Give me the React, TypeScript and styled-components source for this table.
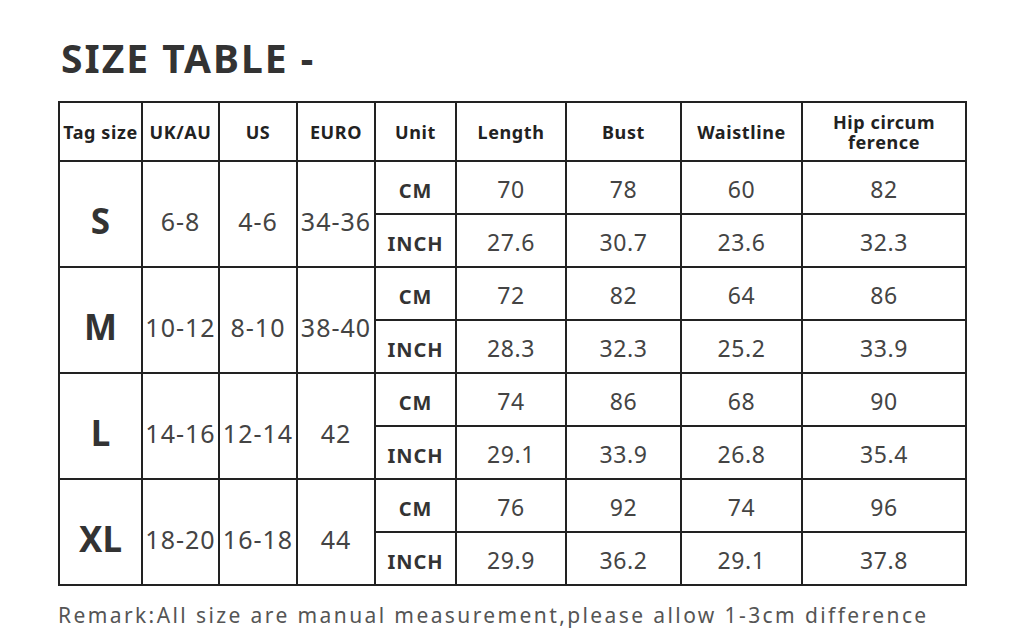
import styled, {createGlobalStyle} from "styled-components";

const GlobalStyle = createGlobalStyle`
  html, body {
    margin: 0;
    padding: 0;
    background: #ffffff;
  }
  body {
    font-family: "Noto Sans", "Open Sans", sans-serif;
  }
`;

const Page = styled.div`
  width: 1013px;
  height: 636px;
  padding: 34px 0 0 58px;
  box-sizing: border-box;
  overflow: hidden;
`;

const Title = styled.h1`
  margin: 0 0 20px 3px;
  font-size: 39px;
  line-height: 47px;
  font-weight: 700;
  color: #333333;
  letter-spacing: 2px;
`;

const Table = styled.table`
  border-collapse: collapse;
  table-layout: fixed;
  width: 907px;
  color: #444444;
  td,
  th {
    border: 2px solid #222222;
    padding: 0;
    text-align: center;
    vertical-align: middle;
    white-space: nowrap;
  }
`;

const HeadCell = styled.th`
  height: 57px;
  font-size: 18px;
  line-height: 20px;
  font-weight: 700;
  color: #222222;
  letter-spacing: 0.6px;
`;

const SizeCell = styled.td`
  font-size: 35px;
  font-weight: 700;
  color: #333333;
  padding-top: 13px !important;
`;

const RangeCell = styled.td`
  font-size: 25px;
  font-weight: 400;
  letter-spacing: 1px;
  padding-top: 13px !important;
`;

const UnitCell = styled.td`
  height: 46px;
  font-size: 20px;
  font-weight: 700;
  color: #333333;
  letter-spacing: 1px;
  padding-top: 5px !important;
`;

const ValueCell = styled.td`
  font-size: 23px;
  font-weight: 400;
  letter-spacing: 0.6px;
  padding-top: 3px !important;
`;

const Remark = styled.p`
  margin: 15px 0 0 0;
  font-size: 21px;
  color: #555555;
  letter-spacing: 2.4px;
  white-space: nowrap;
`;

const widths = [83, 77, 78, 78, 81, 110, 115, 121, 164];

const headers = ["Tag size", "UK/AU", "US", "EURO", "Unit", "Length", "Bust", "Waistline"];

type SizeRow = {
  tag: string;
  uk: string;
  us: string;
  euro: string;
  cm: string[];
  inch: string[];
};

const rows: SizeRow[] = [
  {tag: "S", uk: "6-8", us: "4-6", euro: "34-36", cm: ["70", "78", "60", "82"], inch: ["27.6", "30.7", "23.6", "32.3"]},
  {tag: "M", uk: "10-12", us: "8-10", euro: "38-40", cm: ["72", "82", "64", "86"], inch: ["28.3", "32.3", "25.2", "33.9"]},
  {tag: "L", uk: "14-16", us: "12-14", euro: "42", cm: ["74", "86", "68", "90"], inch: ["29.1", "33.9", "26.8", "35.4"]},
  {tag: "XL", uk: "18-20", us: "16-18", euro: "44", cm: ["76", "92", "74", "96"], inch: ["29.9", "36.2", "29.1", "37.8"]},
];

export default function App() {
  return (
    <Page>
      <GlobalStyle />
      <Title>SIZE TABLE -</Title>
      <Table>
        <colgroup>
          {widths.map((w, i) => (
            <col key={i} style={{width: w}} />
          ))}
        </colgroup>
        <thead>
          <tr>
            {headers.map((h) => (
              <HeadCell key={h}>{h}</HeadCell>
            ))}
            <HeadCell>
              Hip circum
              <br />
              ference
            </HeadCell>
          </tr>
        </thead>
        <tbody>
          {rows.map((r) => [
            <tr key={r.tag + "cm"}>
              <SizeCell rowSpan={2}>{r.tag}</SizeCell>
              <RangeCell rowSpan={2}>{r.uk}</RangeCell>
              <RangeCell rowSpan={2}>{r.us}</RangeCell>
              <RangeCell rowSpan={2}>{r.euro}</RangeCell>
              <UnitCell>CM</UnitCell>
              {r.cm.map((v, i) => (
                <ValueCell key={i}>{v}</ValueCell>
              ))}
            </tr>,
            <tr key={r.tag + "inch"}>
              <UnitCell>INCH</UnitCell>
              {r.inch.map((v, i) => (
                <ValueCell key={i}>{v}</ValueCell>
              ))}
            </tr>,
          ])}
        </tbody>
      </Table>
      <Remark>Remark:All size are manual measurement,please allow 1-3cm difference</Remark>
    </Page>
  );
}
